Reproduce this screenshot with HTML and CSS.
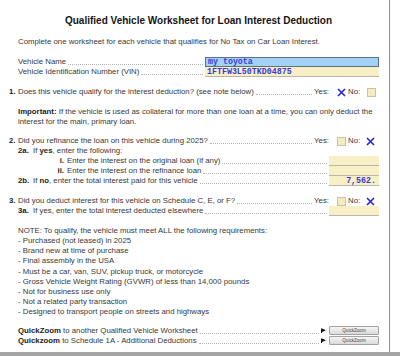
FILE: index.html
```html
<!doctype html>
<html>
<head>
<meta charset="utf-8">
<title>Qualified Vehicle Worksheet</title>
<link rel="stylesheet" href="styles.css">
</head>
<body>
<div class="page">
	<h1 class="title">Qualified Vehicle Worksheet for Loan Interest Deduction</h1>
	<p class="intro">Complete one worksheet for each vehicle that qualifies for No Tax on Car Loan Interest.</p>

	<div class="vehicle">
		<div class="row"><span>Vehicle Name</span><span class="dots"></span><span class="entry wide sel">my toyota</span></div>
		<div class="row"><span>Vehicle Identification Number (VIN)</span><span class="dots"></span><span class="entry wide">1FTFW3L50TKD04875</span></div>
	</div>

	<div class="row q q1"><span class="num">1.</span><span>Does this vehicle qualify for the interest deduction? (see note below)</span><span class="dots"></span><span>Yes:</span>
		<span class="yn"><span class="x"><svg width="9" height="9" viewBox="0 0 9 9"><path d="M1 1L8 8M8 1L1 8" stroke="#2323e0" stroke-width="1.6"/></svg></span><span class="no">No:</span><span class="box"></span></span>
	</div>

	<p class="important"><b>Important:</b> If the vehicle is used as collateral for more than one loan at a time, you can only deduct the<br>interest for the main, primary loan.</p>

	<div class="row q q2"><span class="num">2.</span><span>Did you refinance the loan on this vehicle during 2025?</span><span class="dots"></span><span>Yes:</span>
		<span class="yn"><span class="box first"></span><span class="no">No:</span><span class="x last"><svg width="9" height="9" viewBox="0 0 9 9"><path d="M1 1L8 8M8 1L1 8" stroke="#2323e0" stroke-width="1.6"/></svg></span></span>
	</div>
	<div class="row"><span class="sub">2a.</span><span>If <b>yes</b>, enter the following:</span></div>
	<div class="row"><span class="rn">i.</span><span>Enter the interest on the original loan (if any)</span><span class="dots"></span><span class="entry"></span></div>
	<div class="row"><span class="rn">ii.</span><span>Enter the interest on the refinance loan</span><span class="dots"></span><span class="entry"></span></div>
	<div class="row"><span class="sub">2b.</span><span>If <b>no</b>, enter the total interest paid for this vehicle</span><span class="dots"></span><span class="entry">7,562.</span></div>

	<div class="row q q3"><span class="num">3.</span><span>Did you deduct interest for this vehicle on Schedule C, E, or F?</span><span class="dots"></span><span>Yes:</span>
		<span class="yn"><span class="box first"></span><span class="no">No:</span><span class="x last"><svg width="9" height="9" viewBox="0 0 9 9"><path d="M1 1L8 8M8 1L1 8" stroke="#2323e0" stroke-width="1.6"/></svg></span></span>
	</div>
	<div class="row"><span class="sub">3a.</span><span>If yes, enter the total interest deducted elsewhere</span><span class="dots"></span><span class="entry"></span></div>

	<p class="note">NOTE: To qualify, the vehicle must meet ALL the following requirements:</p>
	<ul class="reqs">
		<li>- Purchased (not leased) in 2025</li>
		<li>- Brand new at time of purchase</li>
		<li>- Final assembly in the USA</li>
		<li>- Must be a car, van, SUV, pickup truck, or motorcycle</li>
		<li>- Gross Vehicle Weight Rating (GVWR) of less than 14,000 pounds</li>
		<li>- Not for business use only</li>
		<li>- Not a related party transaction</li>
		<li>- Designed to transport people on streets and highways</li>
	</ul>

	<div class="links">
		<div class="row"><span><b>QuickZoom</b> to another Qualified Vehicle Worksheet</span><span class="dots"></span><span class="flag"><svg width="5" height="5" viewBox="0 0 5 5"><path d="M0 0.5H1V5H0Z M1 0.5L5 2.2L1 3.9Z" fill="#111"/></svg></span><span class="qz">QuickZoom</span></div>
		<div class="row"><span><b>Quickzoom</b> to Schedule 1A - Additional Deductions</span><span class="dots"></span><span class="flag"><svg width="5" height="5" viewBox="0 0 5 5"><path d="M0 0.5H1V5H0Z M1 0.5L5 2.2L1 3.9Z" fill="#111"/></svg></span><span class="qz">QuickZoom</span></div>
	</div>
</div>
<div class="bottom"></div>
</body>
</html>
```

FILE: styles.css
```css
*{margin:0; padding:0;}
body{font-family:"Liberation Sans", Arial, sans-serif; font-size:7.8px; color:#383838; background:#fff;}
b{font-weight:bold; color:#1c1c1c;}

.page{width:390px; height:352px; box-sizing:border-box; padding:15px 10px 0 18px; border-right:1px solid #8e8e8e; overflow:hidden;}
.bottom{height:4px; background:#a4a4a4;}

.title{font-size:10px; line-height:12px; text-align:center; color:#141414;}
.intro{margin-top:10px; line-height:10px;}

.row{display:flex; align-items:center; height:10px; line-height:10px; white-space:nowrap;}
.dots{flex:1; align-self:flex-end; margin:0 2px 2px; border-bottom:1px dotted #b4b4b4;}

.vehicle{margin-top:10px;}
.entry{width:50px; height:10px; box-sizing:border-box; background:#f7f0c6; border-bottom:1px solid #bdb7a2; font-family:"Liberation Mono", "Courier New", monospace; font-weight:bold; font-size:8.3px; color:#3a3ad8; text-align:right; padding-right:3px; line-height:10px;}
.entry.wide{width:174px; text-align:left; padding:0 0 0 2px;}
.entry.sel{background:#a3d2f8; border:1px solid #5f7080; line-height:8px;}

.q{margin-left:-9px;}
.num{width:9px; font-weight:bold; color:#1c1c1c;}
.q1{margin-top:10px;}
.q2{margin-top:9px;}
.q3{margin-top:10px;}

.yn{width:50px; display:flex; align-items:center;}
.x{width:9px; height:9px; margin-left:8px;}
.x svg{display:block;}
.x.last{margin-left:6px;}
.no{margin-left:2px;}
.box{width:7px; height:7px; background:#f4ecbe; border:1px solid #c9c2a4; margin-left:auto; margin-right:3px;}
.box.first{margin-left:8px; margin-right:0;}

.important{margin-top:10px; line-height:10px;}

.sub{width:15px; font-weight:bold; color:#1c1c1c;}
.rn{width:46px; padding-right:3px; text-align:right; font-weight:bold; color:#1c1c1c;}

.note{margin-top:10px; line-height:10px;}
.reqs{list-style:none; line-height:10.2px;}

.links{margin-top:8px;}
.links .row{height:10px;}
.flag{width:5px; height:5px; margin-right:3px;}
.flag svg{display:block;}
.qz{width:50px; height:9px; box-sizing:border-box; border:1px solid #a2a2a2; border-radius:1px; background:linear-gradient(#f6f6f6, #d9d9d9); font-size:4.6px; line-height:7px; text-align:center; color:#444;}
```
